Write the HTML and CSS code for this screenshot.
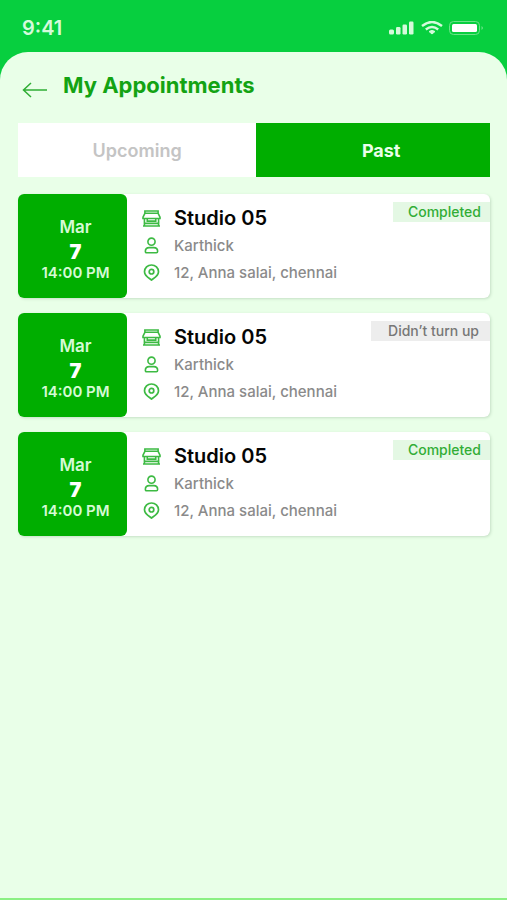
FILE: index.html
```html
<!DOCTYPE html>
<html lang="en">
<head>
<meta charset="utf-8">
<meta name="viewport" content="width=device-width, initial-scale=1">
<title>My Appointments</title>
<link rel="stylesheet" href="styles.css">
</head>
<body>
<svg class="sprite" aria-hidden="true">
  <symbol id="store" viewBox="0 0 20 18">
    <path d="M3 1h14v2.500H3zM3 3.500L1 7.500V9h18V7.500L17 3.500M2.500 9v7.500M17.500 9v7.500M5.500 9v2.800h9V9M2.500 14.200h15M1 17h18"/>
  </symbol>
  <symbol id="person" viewBox="0 0 16 18">
    <circle cx="8" cy="5" r="3.800"/>
    <path d="M1.500 15.200c0-3 2-4 4-4h5c2 0 4 1 4 4q0 1.500-1.300 1.500H2.800q-1.300 0-1.300-1.500z"/>
  </symbol>
  <symbol id="pin" viewBox="0 0 16 17">
    <path d="M8 16C5.500 14 1 12 1 7.700a7 6.700 0 0 1 14 0c0 4.300-4.500 6.300-7 8.300z"/>
    <circle cx="8" cy="7.700" r="2.300"/>
  </symbol>
</svg>
<div class="app">
  <header class="status">
    <span class="clock">9:41</span>
    <div class="signals">
      <svg width="26" height="14" viewBox="0 0 26 14" fill="#d5fadb" aria-hidden="true"><rect x="0" y="8.500" width="5" height="5" rx="1.500"/><rect x="7" y="6" width="4.500" height="7.500" rx="1.200"/><rect x="13.500" y="3.500" width="4.500" height="10" rx="1.200"/><rect x="20" y="0.500" width="4.500" height="13" rx="1.200"/></svg>
      <svg width="22" height="14" viewBox="0 0 22 14" fill="none" stroke="#d5fadb" stroke-width="2.400" aria-hidden="true"><path d="M1 5q10-8 20 0M4.800 8.500q6.200-5 12.400 0"/><path d="M11 13L8 10.500q3-2.200 6 0z" fill="#d5fadb" stroke-width="1"/></svg>
      <svg width="35" height="14" viewBox="0 0 35 14" aria-hidden="true"><rect x=".5" y=".5" width="30" height="13" rx="4" fill="none" stroke="#6be388"/><rect x="3" y="3" width="25" height="8" rx="1.500" fill="#fff"/><path d="M32.500 5q3 2 0 4z" fill="#6be388"/></svg>
    </div>
  </header>
  <main class="sheet">
    <div class="heading">
      <button class="back" type="button" aria-label="Back"><svg width="26" height="16" viewBox="0 0 26 16" aria-hidden="true"><path d="M25 8H1.500M9 1L1.500 8 9 15"/></svg></button>
      <h1>My Appointments</h1>
    </div>
    <nav class="tabs" aria-label="Appointments">
      <button class="tab" type="button">Upcoming</button>
      <button class="tab active" type="button" aria-current="page">Past</button>
    </nav>
    <div class="list">
      <article class="card">
        <div class="date"><span>Mar</span><strong>7</strong><span class="time">14:00 PM</span></div>
        <div class="info">
          <h2><svg class="icon"><use href="#store"/></svg>Studio 05</h2>
          <p><svg class="icon"><use href="#person"/></svg>Karthick</p>
          <p><svg class="icon"><use href="#pin"/></svg>12, Anna salai, chennai</p>
        </div>
        <span class="badge done">Completed</span>
      </article>
      <article class="card">
        <div class="date"><span>Mar</span><strong>7</strong><span class="time">14:00 PM</span></div>
        <div class="info">
          <h2><svg class="icon"><use href="#store"/></svg>Studio 05</h2>
          <p><svg class="icon"><use href="#person"/></svg>Karthick</p>
          <p><svg class="icon"><use href="#pin"/></svg>12, Anna salai, chennai</p>
        </div>
        <span class="badge missed">Didn’t turn up</span>
      </article>
      <article class="card">
        <div class="date"><span>Mar</span><strong>7</strong><span class="time">14:00 PM</span></div>
        <div class="info">
          <h2><svg class="icon"><use href="#store"/></svg>Studio 05</h2>
          <p><svg class="icon"><use href="#person"/></svg>Karthick</p>
          <p><svg class="icon"><use href="#pin"/></svg>12, Anna salai, chennai</p>
        </div>
        <span class="badge done">Completed</span>
      </article>
    </div>
  </main>
</div>
</body>
</html>
```
FILE: styles.css
```css
* {
  box-sizing: border-box;
}

body {
  margin: 0;
  font-family: Inter, "Liberation Sans", sans-serif;
}

h1, h2, p {
  margin: 0;
}

button {
  border: 0;
  padding: 0;
  font: inherit;
  cursor: pointer;
}

.sprite {
  display: none;
}

.app {
  display: flex;
  flex-direction: column;
  min-height: 100vh;
  background: #07cf3f;
  border-bottom: 2px solid #8bf083;
}

.status {
  display: flex;
  align-items: center;
  justify-content: space-between;
  height: 52px;
  padding: 3px 23px 0 22px;
}

.clock {
  color: #d5fadb;
  font-size: 20px;
  font-weight: 600;
}

.signals {
  display: flex;
  gap: 6px;
}

.sheet {
  flex: 1;
  padding: 19px 17px 20px 18px;
  border-radius: 28px 28px 0 0;
  background: #e9ffe8;
}

.heading {
  display: flex;
  align-items: center;
  gap: 15px;
  height: 28px;
  padding-left: 4px;
}

.back {
  display: flex;
  padding-top: 10px;
  background: none;
}

.back path {
  fill: none;
  stroke: #2fae34;
  stroke-width: 1.5;
}

h1 {
  color: #13a313;
  font-size: 22px;
  font-weight: 700;
  line-height: 28px;
}

.tabs {
  display: grid;
  grid-template-columns: 51fr 50fr;
  margin: 24px 0 17px;
}

.tab {
  height: 54px;
  background: #fff;
  color: #c4c4c4;
  font-size: 18px;
  font-weight: 600;
}

.tab.active {
  padding-left: 16px;
  background: #00ae00;
  color: #eaffea;
  font-weight: 700;
}

.list {
  display: flex;
  flex-direction: column;
  gap: 15px;
}

.card {
  position: relative;
  display: flex;
  min-height: 104px;
  border-radius: 6px;
  background: #fff;
  box-shadow: 1px 1px 3px #c5dfc5;
}

.date {
  display: flex;
  flex-direction: column;
  align-items: center;
  width: 109px;
  padding: 21px 0 0 6px;
  border-radius: 6px;
  background: #00ae00;
  color: #d5fad5;
  font-size: 17px;
  font-weight: 600;
  line-height: 25px;
}

.date strong {
  color: #fff;
  font-size: 20px;
  font-weight: 900;
  line-height: 24px;
}

.date .time {
  font-size: 15px;
  line-height: 18px;
}

.info {
  padding: 10px 0 0 14px;
}

.info h2,
.info p {
  display: flex;
  align-items: center;
  gap: 12px;
  color: #8a8a8a;
  font-size: 15px;
  font-weight: 500;
  line-height: 27px;
}

.info h2 {
  color: #050505;
  font-size: 20px;
  font-weight: 600;
  line-height: 28px;
}

.icon {
  width: 21px;
  height: 17px;
  fill: none;
  stroke: #3dba43;
  stroke-width: 1.7;
}

.badge {
  position: absolute;
  top: 8px;
  right: 0;
  padding: 0 9px 0 15px;
  font-size: 14px;
  font-weight: 500;
  line-height: 20px;
}

.badge.done {
  background: #e4f8e4;
  color: #32ad36;
}

.badge.missed {
  padding: 0 11px 0 17px;
  background: #ededed;
  color: #777;
}
```
